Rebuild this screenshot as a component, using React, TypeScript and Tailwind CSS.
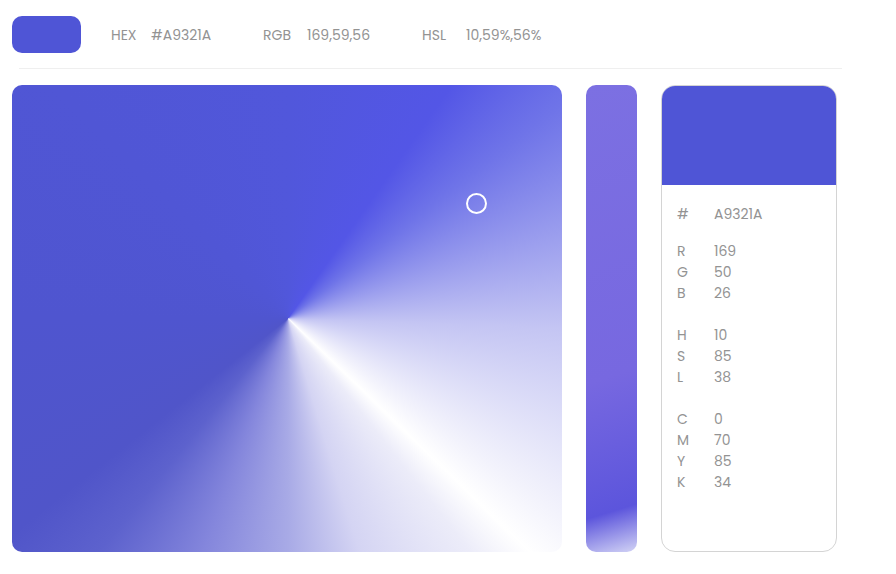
import React from "react";

const rows: (string[] | null)[] = [
  ["#", "A9321A"],
  null,
  ["R", "169"],
  ["G", "50"],
  ["B", "26"],
  null,
  ["H", "10"],
  ["S", "85"],
  ["L", "38"],
  null,
  ["C", "0"],
  ["M", "70"],
  ["Y", "85"],
  ["K", "34"],
];

export default function App() {
  return (
    <div className="w-[896px] h-[574px] bg-white font-['Poppins','Inter',sans-serif] text-[#939393]">
      <div className="flex items-center h-[68px] pt-[1px] pl-[12px]">
        <div className="w-[69px] h-[37px] rounded-[10px] bg-[#4f55d6]" />
        <div className="flex items-center text-[14px] ml-[30px] pt-[2px]">
          <span className="w-[40px]">HEX</span>
          <span className="w-[112px]">#A9321A</span>
          <span className="w-[44px]">RGB</span>
          <span className="w-[115px]">169,59,56</span>
          <span className="w-[44px]">HSL</span>
          <span>10,59%,56%</span>
        </div>
      </div>
      <div className="ml-[19px] w-[823px] h-px bg-[#efefef]" />
      <div className="flex gap-[24px] pl-[12px] pt-[16px]">
        <div className="relative w-[550px] h-[467px] rounded-[10px] bg-[image:conic-gradient(from_0deg_at_50.2%_50%,#5157db_0deg,#5356e6_35deg,#6f74e8_52deg,#c4c5f3_92deg,#f3f3fc_126deg,#ffffff_134deg,#ececf9_142deg,#d4d4f3_163deg,#a8aae6_180deg,#8486dc_200deg,#5d62cd_219deg,#5055c9_232deg,#4f55cf_270deg,#5157db_360deg)]">
          <div className="absolute left-[454px] top-[108px] w-[21px] h-[21px] rounded-full border-[2.5px] border-white" />
        </div>
        <div className="w-[51px] h-[467px] rounded-[10px] bg-[linear-gradient(163deg,#7c70e2_0%,#7768e0_62%,#5c55dc_90%,#d2d3f5_100%)]" />
        <div className="w-[176px] h-[467px] rounded-[14px] border border-[#d4d4d4] overflow-hidden flex flex-col">
          <div className="h-[100px] bg-[#4f55d6] -mx-px -mt-px" />
          <div className="pt-[19px] pl-[15px] text-[14px] leading-[21px]">
            {rows.map((r, i) =>
              r ? (
                <div key={i} className="flex">
                  <span className="w-[37px]">{r[0]}</span>
                  <span>{r[1]}</span>
                </div>
              ) : (
                <div key={i} className={i === 1 ? "h-[16px]" : "h-[21px]"} />
              )
            )}
          </div>
        </div>
      </div>
    </div>
  );
}
